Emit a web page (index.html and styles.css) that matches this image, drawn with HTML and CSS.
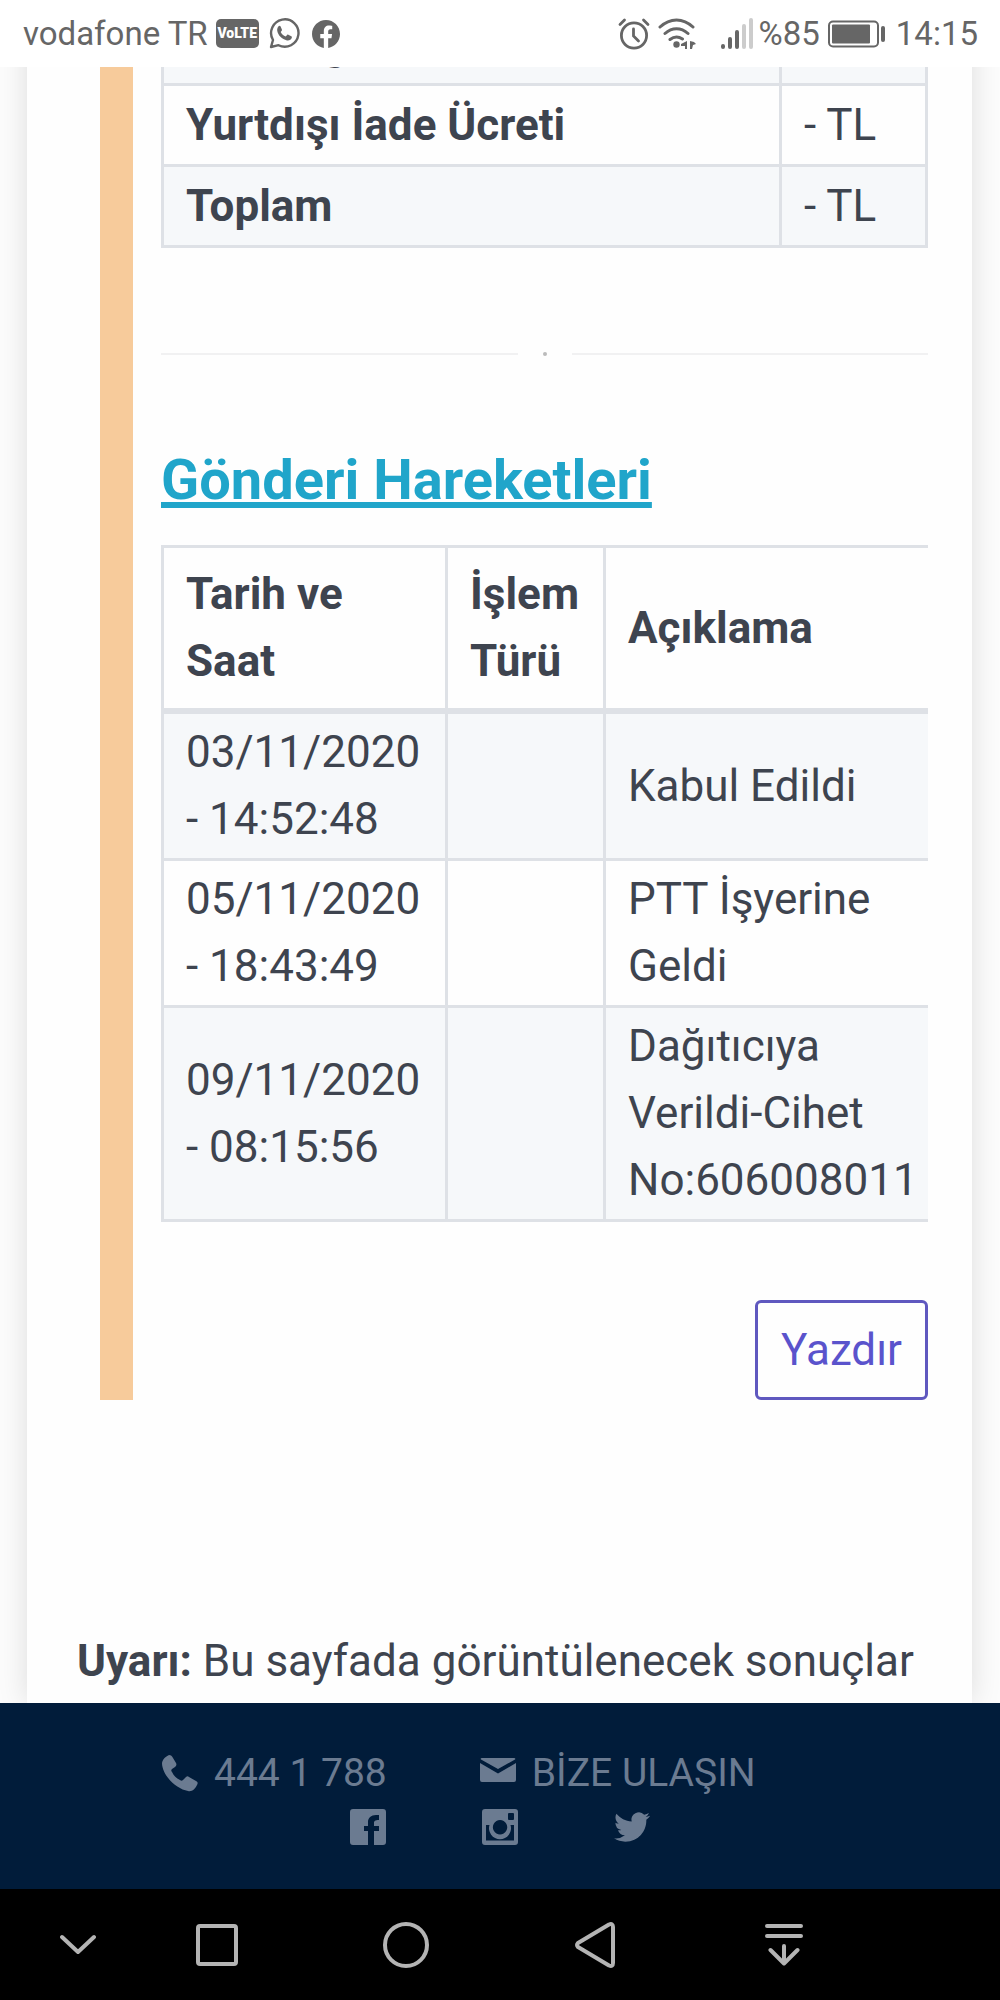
FILE: index.html
```html
<!DOCTYPE html>
<html lang="tr">
<head>
<meta charset="utf-8">
<meta name="viewport" content="width=device-width, initial-scale=1">
<title>Gönderi Takip</title>
<link rel="stylesheet" href="styles.css">
</head>
<body>
<header class="status">
  <div class="status-side">
    <span class="carrier">vodafone TR</span>
    <span class="volte">VoLTE</span>
    <svg class="whatsapp" width="31" height="31" viewBox="0 0 31 31" aria-hidden="true">
      <path d="M2 29 4 22A13.700 13.700 0 1 1 9.500 27.200Z" fill="none" stroke="currentColor" stroke-width="2.400" stroke-linejoin="round"/>
      <path d="M9.600 8.300c.6-.7 1.600-.7 2 .1l1.300 3c.2.500.1.900-.2 1.300l-1 1.200c1 2.100 2.700 3.700 5 4.700l1.400-1.600c.3-.4.700-.5 1.200-.3l3 1.500c.6.300.7.900.5 1.600-.6 2-2.800 3-4.800 2.600-5-1-9.200-5.100-9.800-9.800-.2-1.600.4-3.300 1.400-4.300z" fill="currentColor"/>
    </svg>
    <svg class="facebook" width="28" height="28" viewBox="0 0 24 24" aria-hidden="true">
      <path d="M24 12.070C24 5.400 18.630 0 12 0S0 5.400 0 12.070C0 18.100 4.390 23.100 10.130 24v-8.440H7.080v-3.490h3.050V9.410c0-3.020 1.790-4.690 4.530-4.690 1.310 0 2.680.24 2.680.24v2.970h-1.510c-1.490 0-1.960.93-1.960 1.890v2.250h3.330l-.53 3.490h-2.800V24C19.610 23.100 24 18.100 24 12.070z" fill="currentColor"/>
    </svg>
  </div>
  <div class="status-side">
    <svg width="32" height="32" viewBox="0 0 32 32" fill="none" stroke="currentColor" stroke-width="2.800" stroke-linecap="round" aria-hidden="true">
      <circle cx="16" cy="17.500" r="12.600"/>
      <path d="M15.500 11v7l5 5M2 6.500 6.500 2M30 6.500 25.500 2"/>
    </svg>
    <svg class="wifi" width="38" height="32" viewBox="0 0 38 32" fill="none" stroke="currentColor" stroke-width="3" stroke-linecap="round" aria-hidden="true">
      <path d="M2 9C12-.5 25-.5 35 9M7 15.500c7-6.500 16-6.500 23 0M12 21.500c4.500-3.500 8-3.500 12.500-.5"/>
      <circle cx="18.500" cy="26.500" r="3.200" fill="currentColor" stroke="none"/>
      <path d="M29 23v8h-2v-3h-4v-2zM32 23l4 1 2 2-3 1-1 4h-2z" fill="currentColor" stroke="none"/>
    </svg>
    <svg class="signal" width="34" height="32" viewBox="0 0 34 32" stroke="currentColor" stroke-width="4" stroke-linecap="round" aria-hidden="true">
      <path d="M3 28v1M10 21v8M17 14v15"/>
      <path d="M24 8v21M31 2v27" stroke="#ccc"/>
    </svg>
    <span class="level">%85</span>
    <svg class="battery" width="58" height="28" viewBox="0 0 58 28" aria-hidden="true">
      <rect x="1" y="1.500" width="49" height="25" rx="4" fill="none" stroke="currentColor" stroke-width="2"/>
      <rect x="4" y="4.500" width="38" height="19" rx="1" fill="currentColor"/>
      <rect x="53" y="6" width="4" height="16" rx="2" fill="currentColor"/>
    </svg>
    <time>14:15</time>
  </div>
</header>

<main class="viewport">
  <article class="card">
    <section class="result">
      <table class="fees">
        <tbody>
          <tr><th scope="row">Mal Değeri</th><td></td></tr>
          <tr><th scope="row">Yurtdışı İade Ücreti</th><td>- TL</td></tr>
          <tr><th scope="row">Toplam</th><td>- TL</td></tr>
        </tbody>
      </table>
      <div class="divider"><span></span></div>
      <h2>Gönderi Hareketleri</h2>
      <div class="table-scroll">
        <table class="moves">
          <colgroup><col class="c-date"><col class="c-type"><col class="c-desc"></colgroup>
          <thead>
            <tr><th scope="col">Tarih ve Saat</th><th scope="col">İşlem Türü</th><th scope="col">Açıklama</th></tr>
          </thead>
          <tbody>
            <tr><td>03/11/2020 - 14:52:48</td><td></td><td>Kabul Edildi</td></tr>
            <tr><td>05/11/2020 - 18:43:49</td><td></td><td>PTT İşyerine Geldi</td></tr>
            <tr><td>09/11/2020 - 08:15:56</td><td></td><td>Dağıtıcıya Verildi-Cihet No:606008011</td></tr>
          </tbody>
        </table>
      </div>
      <div class="actions"><button class="print" type="button">Yazdır</button></div>
    </section>
    <p class="notice"><strong>Uyarı:</strong> Bu sayfada görüntülenecek sonuçlar</p>
  </article>
</main>

<footer class="contact">
  <div class="contact-row">
    <a href="tel:4441788">
      <svg width="37" height="37" viewBox="0 0 37 37" aria-hidden="true"><path d="M1 8C2 3 6 1 8 0c2 0 3 1 4 3l3 5c1 2 0 3-1 4l-3 2c-1 1-1 2 0 3 2 4 4 6 8 8 1 1 2 1 3 0l3-3c1-1 2-1 3 0l7 4c2 1 2 2 1 4-2 4-5 7-9 6C15 34 1 20 1 8z" fill="currentColor"/></svg>
      <span>444 1 788</span>
    </a>
    <a href="#iletisim">
      <svg class="mail" width="36" height="31" viewBox="0 0 36 31" fill="currentColor" aria-hidden="true"><path d="M2 0h32q2 0 1 1.500L18 11 1 1.500Q0 0 2 0zM0 5l18 10.500L36 5v17q0 2-2 2H2q-2 0-2-2z"/></svg>
      <span>BİZE ULAŞIN</span>
    </a>
  </div>
  <div class="social">
    <a href="#facebook" aria-label="Facebook"><svg width="36" height="36" viewBox="0 0 36 36"><path d="M3 0h30q3 0 3 3v30q0 3-3 3h-9V22h5V17h-5v-3c0-2 1-3 5-3V6h-3c-5 0-8 3-8 7v4h-4v5h4v14H3q-3 0-3-3V3q0-3 3-3z" fill="currentColor"/></svg></a>
    <a href="#instagram" aria-label="Instagram"><svg width="36" height="36" viewBox="0 0 36 36"><path fill-rule="evenodd" d="M3 0h30q3 0 3 3v30q0 3-3 3H3q-3 0-3-3V3q0-3 3-3zM27 4q-1 0-1 1v5q0 1 1 1h4q1 0 1-1V5q0-1-1-1zM4 16v15.500h28V16h-3.500A11 11 0 1 1 7.500 16zM18 11a7.200 7.200 0 1 0 .1 0z" fill="currentColor"/></svg></a>
    <a href="#twitter" aria-label="Twitter"><svg width="36" height="36" viewBox="0 0 24 24"><path d="M23.950 4.570a10 10 0 0 1-2.820.77 4.960 4.960 0 0 0 2.160-2.720c-.95.550-2 .95-3.130 1.180a4.920 4.920 0 0 0-8.380 4.480C7.690 8.090 4.070 6.130 1.640 3.160a4.820 4.820 0 0 0-.66 2.480c0 1.710.87 3.210 2.190 4.100a4.900 4.900 0 0 1-2.230-.62v.06a4.920 4.920 0 0 0 3.950 4.830 5 5 0 0 1-2.210.08 4.940 4.940 0 0 0 4.600 3.420A9.870 9.870 0 0 1 0 19.540a13.990 13.990 0 0 0 7.550 2.210c9.050 0 14-7.500 14-13.980 0-.21 0-.42-.02-.63a9.940 9.940 0 0 0 2.460-2.550z" fill="currentColor"/></svg></a>
  </div>
</footer>

<nav class="system" aria-label="Gezinme">
  <button class="hide" type="button" aria-label="Gizle"><svg width="36" height="22" viewBox="0 0 36 22"><path d="M2 3l16 15L34 3"/></svg></button>
  <button type="button" aria-label="Son uygulamalar"><svg width="42" height="42" viewBox="0 0 42 42"><rect x="2" y="2" width="38" height="38" rx="2"/></svg></button>
  <button type="button" aria-label="Ana ekran"><svg width="46" height="46" viewBox="0 0 46 46"><circle cx="23" cy="23" r="21"/></svg></button>
  <button type="button" aria-label="Geri"><svg width="40" height="46" viewBox="0 0 40 46"><path d="M3 21 34 2.500Q38 1 38 5v36q0 4-4 2.500L3 25q-2-2 0-4z"/></svg></button>
  <button type="button" aria-label="Bildirimler"><svg width="38" height="42" viewBox="0 0 38 42"><path d="M2 2h34M2 12h34M19 22v17M5.500 26 19 39.500 32.500 26"/></svg></button>
</nav>
</body>
</html>
```
FILE: styles.css
```css
* { box-sizing: border-box; }

body {
  margin: 0;
  height: 100vh;
  display: flex;
  flex-direction: column;
  overflow: hidden;
  background: #fcfcfc;
  color: #3e444f;
  font: 44px/67px Roboto, "Noto Sans", sans-serif;
}

svg { display: block; flex: none; }
a { color: inherit; text-decoration: none; }
button { font: inherit; background: none; border: 0; padding: 0; }

/* Phone status bar */
.status {
  flex: none;
  display: flex;
  justify-content: space-between;
  height: 67px;
  padding: 0 22px 0 23px;
  background: #fff;
  color: #666;
  font-size: 33px;
}
.status-side { display: flex; align-items: center; }
.volte {
  margin-left: 8px;
  width: 43px;
  border-radius: 5px;
  background: #666;
  color: #fff;
  font-size: 14px;
  font-weight: 900;
  line-height: 29px;
  text-align: center;
}
.whatsapp { margin-left: 10px; }
.facebook { margin-left: 12px; }
.wifi { margin-left: 8px; }
.signal { margin-left: 24px; }
.level { margin-left: 5px; }
.battery { margin: 0 10px 0 8px; }

/* Scrolled page: its lower end rests on the footer */
.viewport {
  flex: 1;
  min-height: 0;
  display: flex;
  flex-direction: column;
  justify-content: flex-end;
  overflow: hidden;
  padding: 0 28px 0 27px;
}
.card {
  flex: none;
  padding: 0 44px 8px 50px;
  background: #fefefe;
  box-shadow: 0 0 28px rgba(0, 0, 0, .13);
}
.result {
  margin-left: 23px;
  padding-left: 28px;
  border-left: 33px solid #f7cb9b;
}

table { border-collapse: collapse; table-layout: fixed; }
th, td {
  border: 3px solid #dee1e6;
  padding: 5px 22px;
  text-align: left;
  font-weight: 400;
}
th { font-weight: 700; }
tbody tr:nth-child(odd) { background: #f6f8fa; }

.fees { width: 100%; }
.fees th, .fees td { padding: 6px 22px 5px; }
.fees td { width: 146px; }

.divider {
  display: flex;
  align-items: center;
  justify-content: center;
  gap: 25px;
  height: 4px;
  margin: 104px 0 91px;
}
.divider::before, .divider::after {
  content: "";
  flex: 1;
  height: 2px;
  background: #f1f1f2;
}
.divider span { width: 4px; height: 4px; border-radius: 50%; background: #bbb; }

h2 {
  margin: 0 0 31px;
  color: #20a5ca;
  font-size: 56px;
  line-height: 67px;
  text-decoration: underline 6px;
  text-underline-offset: 3px;
  text-decoration-skip-ink: none;
}

.table-scroll { overflow: hidden; }
.moves { width: 820px; }
.c-date { width: 284px; }
.c-type { width: 158px; }
.moves thead th { padding: 13px 22px; border-bottom-width: 6px; }
.moves td:last-child { padding-right: 100px; }

.actions { display: flex; justify-content: flex-end; margin-top: 78px; }
.print {
  padding: 14px 23px 13px;
  border: 3px solid #5f58bf;
  border-radius: 6px;
  color: #5a53cc;
}
.notice { margin: 228px 0 0; white-space: nowrap; }

/* Contact bar */
.contact {
  flex: none;
  padding: 45px 0 44px;
  background: #011c3a;
  color: #6b7b91;
  font-size: 39px;
  line-height: 50px;
}
.contact-row { display: flex; gap: 93px; padding-left: 161px; }
.contact-row a { display: flex; align-items: center; gap: 16px; }
.social { display: flex; justify-content: center; gap: 96px; margin-top: 11px; }

/* System navigation */
.system {
  flex: none;
  display: grid;
  grid-template-columns: 122fr 189fr 189fr 189fr 189fr 122fr;
  height: 111px;
  background: #000;
}
.system button { display: flex; align-items: center; justify-content: center; color: #b4b4b4; }
.system .hide { padding-left: 34px; }
.system svg {
  fill: none;
  stroke: currentColor;
  stroke-width: 4;
  stroke-linecap: round;
  stroke-linejoin: round;
}
```
